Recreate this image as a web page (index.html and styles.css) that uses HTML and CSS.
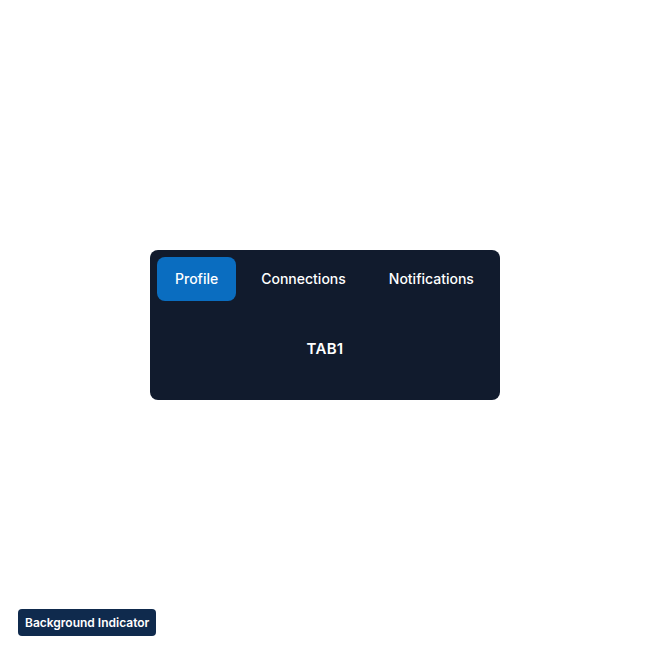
FILE: index.html
```html
<!DOCTYPE html>
<html>
<head>
<meta charset="utf-8">
<link rel="stylesheet" href="styles.css">
</head>
<body>
<main class="stage">
  <section class="tabs-card">
    <nav class="tab-list">
      <button class="tab tab-active">Profile</button>
      <button class="tab">Connections</button>
      <button class="tab">Notifications</button>
    </nav>
    <div class="tab-panel">TAB1</div>
  </section>
</main>
<div class="indicator">Background Indicator</div>
</body>
</html>
```

FILE: styles.css
```css
* { box-sizing: border-box; }
html, body { margin: 0; padding: 0; }
body {
  width: 650px;
  height: 650px;
  background: #ffffff;
  font-family: Inter, "Noto Sans", sans-serif;
  position: relative;
}
.stage {
  height: 650px;
  display: flex;
  align-items: center;
  justify-content: center;
}
.tabs-card {
  width: 350px;
  height: 150px;
  background: #111b2d;
  border-radius: 8px;
  padding: 7px;
  display: flex;
  flex-direction: column;
}
.tab-list {
  display: flex;
  gap: 7px;
}
.tab {
  border: 0;
  background: transparent;
  color: #ffffff;
  font-family: Inter, "Noto Sans", sans-serif;
  font-size: 14px;
  font-weight: 500;
  line-height: 20px;
  padding: 12px 18px;
  border-radius: 8px;
  cursor: pointer;
}
.tab-active {
  background: #0a6dc0;
}
.tab-panel {
  flex: 1;
  display: flex;
  align-items: center;
  justify-content: center;
  color: #ffffff;
  font-size: 15px;
  font-weight: 600;
  letter-spacing: 0.3px;
  padding-top: 3px;
}
.indicator {
  position: absolute;
  left: 18px;
  bottom: 14px;
  height: 27px;
  padding: 0 7px;
  display: flex;
  align-items: center;
  background: #0f2a4d;
  color: #ffffff;
  font-size: 12px;
  font-weight: 600;
  border-radius: 4px;
}
```
